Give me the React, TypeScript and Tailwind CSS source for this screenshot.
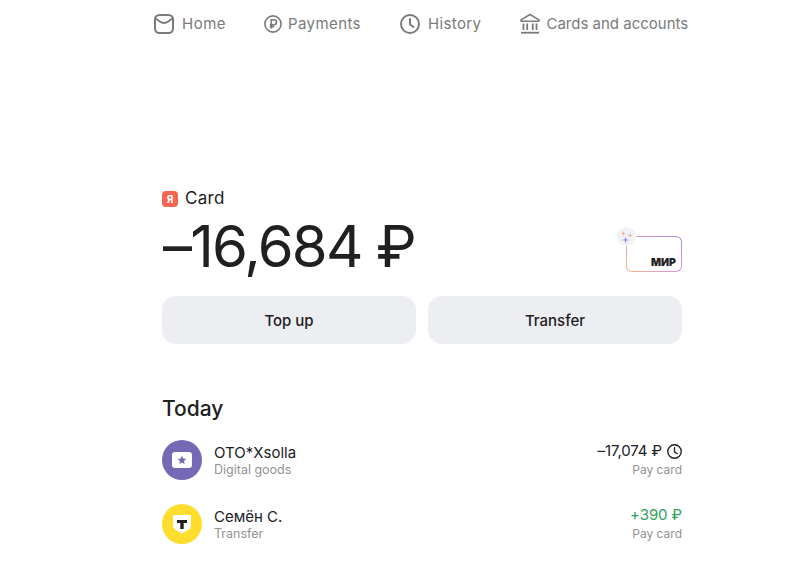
import React from "react";

function MailIcon() {
  return (
    <svg width="20" height="20" viewBox="0 0 20 20" fill="none" stroke="#7a7a7a" strokeWidth="2" strokeLinecap="round" strokeLinejoin="round">
      <rect x="1" y="1" width="18" height="18" rx="4.5" />
      <path d="M1.5 5c3 0 3.5 4 8.5 4s5.500-4 8.500-4" />
    </svg>
  );
}

function RubleCircle() {
  return (
    <svg width="18" height="18" viewBox="0 0 18 18" fill="none" stroke="#7a7a7a" strokeWidth="1.6">
      <circle cx="9" cy="9" r="8.100" />
      <path d="M7.300 13.500V4.800h2.700a2.400 2.400 0 0 1 0 4.900H5.800M5.800 11.600h4.400" />
    </svg>
  );
}

function ClockIcon({ size = 20, color = "#7a7a7a", sw = 2 }: { size?: number; color?: string; sw?: number }) {
  return (
    <svg width={size} height={size} viewBox="0 0 20 20" fill="none" stroke={color} strokeWidth={sw} strokeLinecap="round" strokeLinejoin="round">
      <circle cx="10" cy="10" r="9" />
      <path d="M10 5v5.500l3.500 2.500" />
    </svg>
  );
}

function BankIcon() {
  return (
    <svg width="20" height="21" viewBox="0 0 20 21" fill="none" stroke="#7a7a7a" strokeWidth="1.5">
      <path d="M1 6.800 10 1.500l9 5.300v1.400H1z" strokeLinejoin="round" />
      <path d="M3.500 10.500v6.500M7.200 10.500v6.500M12.800 10.500v6.500M16.500 10.500v6.500" strokeWidth="1.800" />
      <path d="M1 19.700h18" strokeWidth="1.800" />
    </svg>
  );
}

function NavItem({ icon, label, className }: { icon: React.ReactNode; label: string; className: string }) {
  return (
    <div className="flex items-center">
      {icon}
      <span className={`text-[15px] leading-5 text-[#7a7a7a] ${className}`}>{label}</span>
    </div>
  );
}

function Row({
  avatar,
  title,
  sub,
  amount,
  green,
  clock,
}: {
  avatar: React.ReactNode;
  title: string;
  sub: string;
  amount: string;
  green?: boolean;
  clock?: boolean;
}) {
  return (
    <div className="flex items-center h-10">
      {avatar}
      <div className="ml-3 mt-[2px] flex-1 flex flex-col">
        <span className="text-[15px] leading-[18px] text-[#21201f]">{title}</span>
        <span className="text-[12.500px] leading-4 text-[#929292]">{sub}</span>
      </div>
      <div className="flex flex-col items-end">
        <div className="flex items-center gap-[5px]">
          <span className={`text-[15px] leading-5 tracking-[-0.1px] ${green ? "text-[#2f9e5b]" : "text-[#21201f]"}`}>{amount}</span>
          {clock && <ClockIcon size={15} color="#21201f" sw={1.8} />}
        </div>
        <span className="text-[12px] leading-[18px] text-[#929292]">Pay card</span>
      </div>
    </div>
  );
}

export default function App() {
  return (
    <div className="h-[571px] w-full overflow-hidden bg-white font-['Inter','Noto_Sans',sans-serif]">
      <nav className="h-[47px] pl-[154px] flex items-center">
        <NavItem icon={<MailIcon />} label="Home" className="ml-2 mr-[38px] tracking-[0.5px]" />
        <NavItem icon={<RubleCircle />} label="Payments" className="ml-[6px] mr-[39px] tracking-[0.4px]" />
        <NavItem icon={<ClockIcon />} label="History" className="ml-2 mr-[39px] tracking-[0.4px]" />
        <NavItem icon={<BankIcon />} label="Cards and accounts" className="ml-[6px]" />
      </nav>

      <main className="w-[520px] ml-[162px] pt-[142px]">
        <div className="flex items-center h-5 gap-[7px]">
          <div className="w-4 h-4 rounded-[4px] bg-[#f4664f] flex items-center justify-center text-white text-[10px] font-bold leading-none">Я</div>
          <span className="text-[17px] tracking-[0.3px] text-[#21201f]">Card</span>
        </div>

        <div className="mt-[7px] flex items-center justify-between h-[60px]">
          <span className="text-[58px] leading-none tracking-[-1.800px] text-[#21201f] ml-[1px]">–16,684 ₽</span>
          <div className="relative w-[56px] h-[36px] mt-[16px] rounded-[6px] p-px bg-[linear-gradient(45deg,#f3b48c,#dc94dc_60%,#a98ae0)]">
            <div className="w-full h-full bg-white rounded-[5px] flex items-end justify-end pr-[5px] pb-[2px]">
              <span className="text-[10.500px] font-black leading-[12px] text-[#21201f]">МИР</span>
            </div>
            <div className="absolute -left-[9px] -top-[9px] w-[19px] h-[19px] rounded-full bg-[#f1f1f8] flex items-center justify-center">
              <svg width="14" height="14" viewBox="0 0 14 14">
                <path d="M3.500 1l.5 2 2 .5-2 .5-.5 2-.5-2-2-.5 2-.5z" fill="#eda67c" />
                <path d="M10 3l.5 2 2 .5-2 .5-.5 2-.5-2-2-.5 2-.5z" fill="#eda67c" />
                <path d="M5.500 6.500l.8 2.700 2.700.8-2.700.8-.8 2.700-.8-2.700L2 10l2.700-.8z" fill="#a08ae8" />
              </svg>
            </div>
          </div>
        </div>

        <div className="mt-5 grid grid-cols-2 gap-3">
          <button className="h-12 pt-[2px] rounded-[14px] bg-[#edeef2] text-[15px] font-medium text-[#21201f]">Top up</button>
          <button className="h-12 pt-[2px] rounded-[14px] bg-[#edeef2] text-[15px] font-medium text-[#21201f]">Transfer</button>
        </div>

        <h2 className="mt-[51px] text-[21px] leading-7 font-medium text-[#21201f]">Today</h2>

        <div className="mt-[17px] flex flex-col gap-6">
          <Row
            title="OTO*Xsolla"
            sub="Digital goods"
            amount="–17,074 ₽"
            clock
            avatar={
              <div className="w-10 h-10 rounded-full bg-[#7668b4] flex items-center justify-center">
                <svg width="20" height="16" viewBox="0 0 20 16">
                  <rect width="20" height="16" rx="3" fill="#fff" />
                  <path d="M10 3.800l1.300 2.800 3 .3-2.300 2 .7 3L10 10.400l-2.700 1.500.7-3-2.300-2 3-.3z" fill="#7668b4" />
                </svg>
              </div>
            }
          />
          <Row
            title="Семён С."
            sub="Transfer"
            amount="+390 ₽"
            green
            avatar={
              <div className="w-10 h-10 rounded-full bg-[#ffdd2d] flex items-center justify-center">
                <svg width="20" height="21" viewBox="0 0 20 21">
                  <path d="M1 1h18v10.500c0 2.500-1 3.500-3 4.500l-6 3.500L4 16c-2-1-3-2-3-4.500z" fill="#fff" />
                  <path d="M5 6h10v3h-3.300v6H8.300V9H5z" fill="#21201f" />
                </svg>
              </div>
            }
          />
        </div>
      </main>
    </div>
  );
}
